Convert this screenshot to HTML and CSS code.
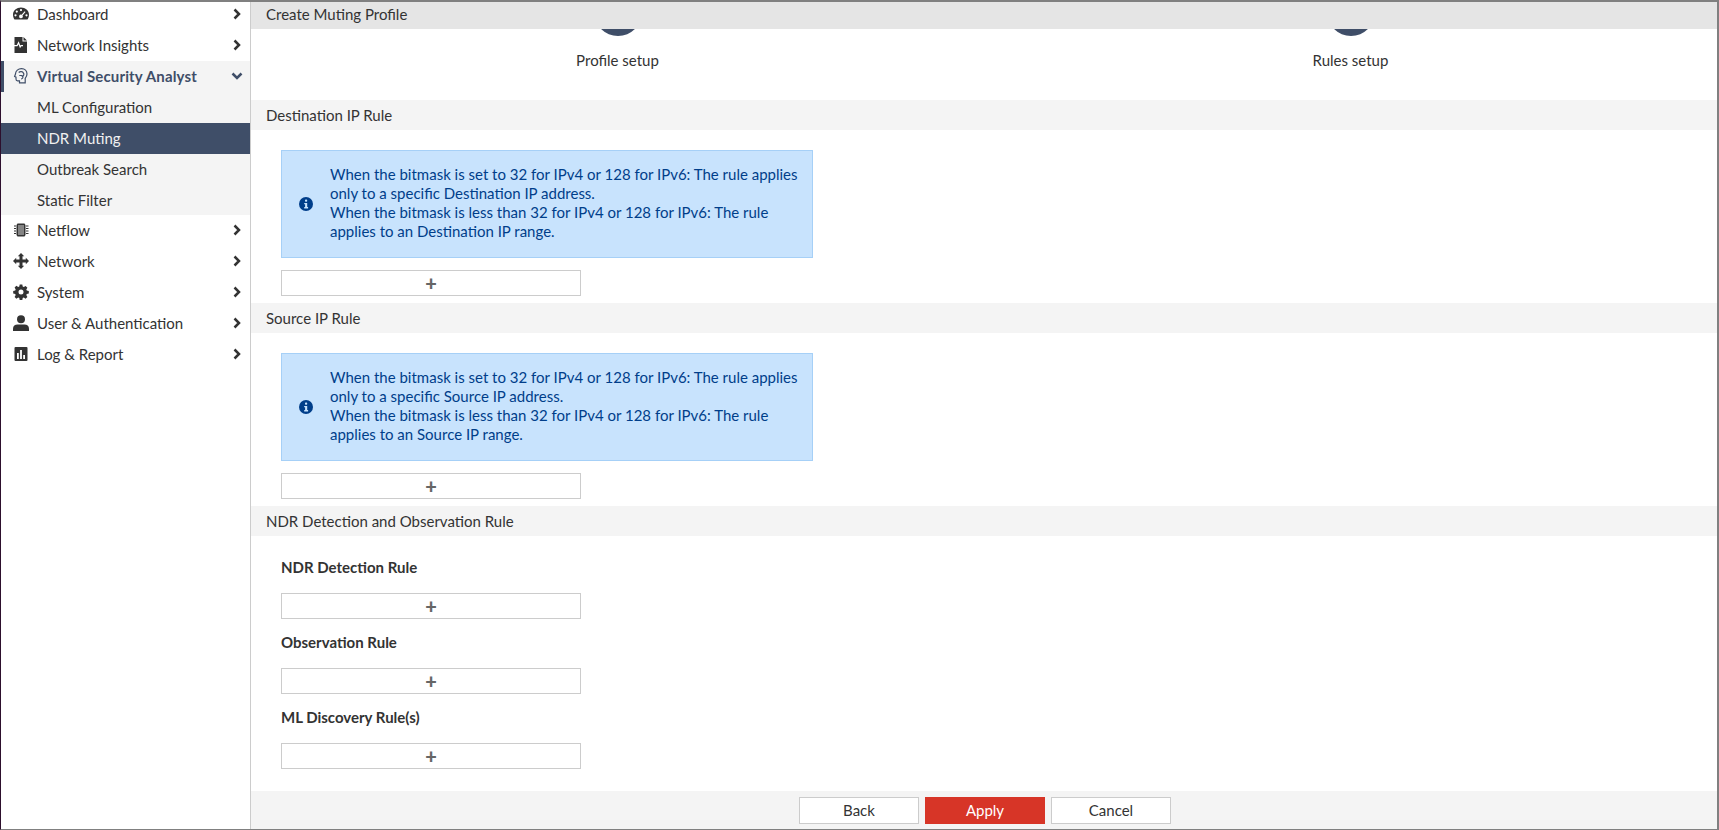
FILE: index.html
```html
<!DOCTYPE html>
<html lang="en">
<head>
<meta charset="utf-8">
<title>Create Muting Profile</title>
<link rel="stylesheet" href="styles.css">
</head>
<body>
<div class="app">
  <nav class="sidebar">
    <a class="item first"><svg class="ico" viewBox="0 0 16 16"><path fill="#333" fill-rule="evenodd" d="M8 1.500c4.400 0 8 3 8 7 0 2-.6 3.700-1.500 5H1.500C.6 12.200 0 10.500 0 8.500c0-4 3.600-7 8-7zM8 3a1.100 1.100 0 100 2.200A1.100 1.100 0 008 3zM3.800 4.500a1.100 1.100 0 100 2.200 1.100 1.100 0 000-2.200zM2.500 8.200a1.100 1.100 0 100 2.200 1.100 1.100 0 000-2.200zM13.500 8.200a1.100 1.100 0 100 2.200 1.100 1.100 0 000-2.200zM11.700 5.200L8.600 8.800a1.800 1.800 0 10.900.8l3-3.600z"/></svg><span class="lbl">Dashboard</span><svg class="chev" viewBox="0 0 10 12"><path d="M2.500 1.500L7 6l-4.500 4.500" fill="none" stroke="#333" stroke-width="2.500"/></svg></a>
    <a class="item"><svg class="ico" viewBox="0 0 16 16"><path fill="#333" d="M3 0h6.500v4.500H14V16H1.500v-6.700h3l1-2 1.500 4 1.300-2h1.700V8.100H7.700l-.3.600L5.600 4.300 3.800 8H1.500V0zM10.500 0L14 3.500h-3.500z"/></svg><span class="lbl">Network Insights</span><svg class="chev" viewBox="0 0 10 12"><path d="M2.500 1.500L7 6l-4.500 4.500" fill="none" stroke="#333" stroke-width="2.500"/></svg></a>
    <a class="item open"><svg class="ico" viewBox="0 0 16 16"><path fill="none" stroke="#3f4e68" stroke-width="1.200" d="M2.500 6C2.500 2.800 5.300.7 8.500.7c3.300 0 5.500 2.300 5.500 5.300 0 2-.9 3.300-1.800 4.300v4.500H6.500v-2H4.500c-1 0-1.500-.8-1.500-1.800V9.200L1.600 8.500zM5.700 4.500C7.200 3 9.800 3.500 10.300 5c1 1 .6 3-.9 3.200 1 .8.500 2.800-1.400 2.800M6.300 7.500h2.900"/></svg><span class="lbl">Virtual Security Analyst</span><svg class="chev-down" viewBox="0 0 12 10"><path d="M1.500 2.500L6 7l4.500-4.500" fill="none" stroke="#3f4e68" stroke-width="2.500"/></svg></a>
    <a class="item sub">ML Configuration</a>
    <a class="item sub active">NDR Muting</a>
    <a class="item sub">Outbreak Search</a>
    <a class="item sub short">Static Filter</a>
    <a class="item"><svg class="ico" viewBox="0 0 16 16"><path fill="#333" d="M4.500 1.500h7l1 1.500v10l-1 1.500h-7l-1-1.500V3zM1 3.500h2v1H1zM1 6h2v1H1zM1 8.500h2v1H1zM1 11h2v1H1zM13 3.500h2.500v1H13zM13 6h2.500v1H13zM13 8.500h2.500v1H13zM13 11h2.500v1H13z"/><path stroke="#fff" stroke-width=".8" d="M6 3v10M8 3v10M10 3v10"/></svg><span class="lbl">Netflow</span><svg class="chev" viewBox="0 0 10 12"><path d="M2.500 1.500L7 6l-4.500 4.500" fill="none" stroke="#333" stroke-width="2.500"/></svg></a>
    <a class="item"><svg class="ico" viewBox="0 0 16 16"><path fill="#333" d="M8 0l3.200 3.200H9.500v3.300h3.300V4.800L16 8l-3.200 3.200V9.500H9.500v3.300h1.700L8 16l-3.200-3.200h1.700V9.500H3.200v1.700L0 8l3.200-3.200v1.700h3.300V3.200H4.800z"/></svg><span class="lbl">Network</span><svg class="chev" viewBox="0 0 10 12"><path d="M2.500 1.500L7 6l-4.500 4.500" fill="none" stroke="#333" stroke-width="2.500"/></svg></a>
    <a class="item"><svg class="ico" viewBox="0 0 16 16"><path fill="#333" fill-rule="evenodd" d="M6.700.5h2.600l.4 2 1.100.5 1.800-1.100 1.800 1.800-1.100 1.800.5 1.100 2 .4v2.600l-2 .4-.5 1.100 1.100 1.800-1.800 1.800-1.800-1.100-1.100.5-.4 2H6.700l-.4-2-1.100-.5-1.800 1.100-1.800-1.800 1.100-1.800-.5-1.100-2-.4V6.900l2-.4.5-1.100-1.100-1.800 1.800-1.800 1.800 1.100 1.100-.5zM8 5.500a2.500 2.500 0 100 5 2.500 2.500 0 000-5z"/></svg><span class="lbl">System</span><svg class="chev" viewBox="0 0 10 12"><path d="M2.500 1.500L7 6l-4.500 4.500" fill="none" stroke="#333" stroke-width="2.500"/></svg></a>
    <a class="item"><svg class="ico" viewBox="0 0 16 16"><circle cx="8" cy="4.200" r="4" fill="#333"/><path fill="#333" d="M0 16v-2.500C0 11 2 9.500 4.500 9.500h7c2.500 0 4.500 1.500 4.500 4V16z"/></svg><span class="lbl">User &amp; Authentication</span><svg class="chev" viewBox="0 0 10 12"><path d="M2.500 1.500L7 6l-4.500 4.500" fill="none" stroke="#333" stroke-width="2.500"/></svg></a>
    <a class="item"><svg class="ico" viewBox="0 0 16 16"><path fill="#333" fill-rule="evenodd" d="M2.500 1h11A1 1 0 0114.500 2v12a1 1 0 01-1 1h-11a1 1 0 01-1-1V2a1 1 0 011-1zM4 7v6h1.800V7zM7.100 4v9h1.800V4zM10.200 9v4H12V9z"/></svg><span class="lbl">Log &amp; Report</span><svg class="chev" viewBox="0 0 10 12"><path d="M2.500 1.500L7 6l-4.500 4.500" fill="none" stroke="#333" stroke-width="2.500"/></svg></a>
  </nav>
  <main class="main">
    <header class="title">Create Muting Profile</header>
    <div class="scroll">
      <div class="stepper">
        <div class="step"><span class="dot"></span><span class="step-label">Profile setup</span></div>
        <div class="step"><span class="dot"></span><span class="step-label">Rules setup</span></div>
      </div>
      <h2 class="bar">Destination IP Rule</h2>
      <section class="body">
        <div class="info">
          <svg class="info-ico" viewBox="0 0 14 14"><circle cx="7" cy="7" r="7" fill="#003e8a"/><rect x="6" y="2.600" width="2.200" height="2.200" rx=".8" fill="#c8e3fd"/><path fill="#c8e3fd" d="M5.200 5.900h3v4.200h.9v1.300H5.200v-1.300h.9V7.200h-.9z"/></svg>
          <p class="info-text">When the bitmask is set to 32 for IPv4 or 128 for IPv6: The rule applies only to a specific Destination IP address.<br>When the bitmask is less than 32 for IPv4 or 128 for IPv6: The rule applies to an Destination IP range.</p>
        </div>
        <button class="add">+</button>
      </section>
      <h2 class="bar">Source IP Rule</h2>
      <section class="body">
        <div class="info">
          <svg class="info-ico" viewBox="0 0 14 14"><circle cx="7" cy="7" r="7" fill="#003e8a"/><rect x="6" y="2.600" width="2.200" height="2.200" rx=".8" fill="#c8e3fd"/><path fill="#c8e3fd" d="M5.200 5.900h3v4.200h.9v1.300H5.200v-1.300h.9V7.200h-.9z"/></svg>
          <p class="info-text">When the bitmask is set to 32 for IPv4 or 128 for IPv6: The rule applies only to a specific Source IP address.<br>When the bitmask is less than 32 for IPv4 or 128 for IPv6: The rule applies to an Source IP range.</p>
        </div>
        <button class="add">+</button>
      </section>
      <h2 class="bar">NDR Detection and Observation Rule</h2>
      <section class="body rules">
        <h3 class="rule-title">NDR Detection Rule</h3>
        <button class="add">+</button>
        <h3 class="rule-title">Observation Rule</h3>
        <button class="add">+</button>
        <h3 class="rule-title">ML Discovery Rule(s)</h3>
        <button class="add">+</button>
      </section>
    </div>
    <footer class="footer">
      <button class="btn">Back</button>
      <button class="btn primary">Apply</button>
      <button class="btn">Cancel</button>
    </footer>
  </main>
</div>
</body>
</html>
```
FILE: styles.css
```css
* { box-sizing: border-box; }
html, body { margin: 0; padding: 0; height: 100%; overflow: hidden; }
body { font-family: "Lato", sans-serif; font-size: 15px; color: #333; background: #fff; }
.app {
  display: flex; width: 1719px; height: 830px;
  border-top: 2px solid #808080; border-right: 2px solid #808080; border-bottom: 1px solid #808080; border-left: 1px solid #2d0f2d;
}
.sidebar { width: 250px; flex: none; border-right: 1px solid #ccc; background: #fff; display: flex; flex-direction: column; }
.item { height: 31px; flex: none; display: flex; align-items: center; padding: 0 8px 1px 12px; color: #333; font-size: 15px; }
.item.first { height: 28px; padding-bottom: 4px; }
.ico { width: 16px; height: 16px; flex: none; margin-right: 8px; }
.lbl { flex: 1; }
.chev { width: 10px; height: 12px; flex: none; }
.chev-down { width: 12px; height: 10px; flex: none; margin-right: -1px; }
.item.open { background: #f4f4f4; color: #3f4e68; font-weight: 700; border-left: 3px solid #3f4e68; padding-left: 9px; }
.item.open .lbl { letter-spacing: .14px; }
.item.sub { background: #f4f4f4; padding-left: 36px; }
.item.sub.short { height: 30px; }
.item.active { background: #3f4e68; color: #f1f1f1; }
.main { flex: 1; min-width: 0; display: flex; flex-direction: column; }
.title { height: 27px; flex: none; background: #e5e5e5; padding-left: 15px; line-height: 25px; font-size: 15px; position: relative; z-index: 1; }
.scroll { flex: 1; min-height: 0; overflow: hidden; }
.stepper { display: flex; height: 112px; margin-top: -41px; }
.step { flex: 1; display: flex; flex-direction: column; align-items: center; }
.dot { width: 48px; height: 48px; border-radius: 50%; background: #3f4e68; flex: none; }
.step-label { margin-top: 14px; line-height: 20px; }
.bar { margin: 0; height: 30px; background: #f4f4f4; font-weight: 400; font-size: 15px; line-height: 30px; padding-left: 15px; }
.body { padding: 20px 30px 7px; height: 173px; }
.rules { height: 255px; }
.info {
  width: 532px; height: 108px; background: #c8e3fd; border: 1px solid #a6d0f7; color: #003e8a;
  display: flex; align-items: center; padding-left: 17px; padding-right: 10px; margin-bottom: 12px;
}
.info-ico { width: 14px; height: 14px; flex: none; margin-right: 17px; }
.info-text { margin: 0; line-height: 19px; position: relative; top: -1px; }
.add { display: block; width: 300px; height: 26px; background: #fff; border: 1px solid #ccc; color: #666; font: 900 20px/22px "Lato", sans-serif; padding: 0; }
.rule-title { margin: 0; font-size: 15px; font-weight: 700; line-height: 19px; margin-top: 14px; margin-bottom: 15px; }
.rules .rule-title:first-child { margin-top: 2px; margin-bottom: 16px; }
.rules .add + .rule-title { margin-top: 14px; margin-bottom: 16px; }
.footer { height: 38px; flex: none; background: #f4f4f4; display: flex; justify-content: center; align-items: flex-start; gap: 6px; padding-top: 6px; padding-left: 2px; }
.btn { width: 120px; height: 27px; background: #fff; border: 1px solid #ccc; color: #333; font: 400 15px "Lato", sans-serif; padding: 0 0 1px; }
.btn.primary { background: #d73527; border-color: #d73527; color: #fff; }
```
